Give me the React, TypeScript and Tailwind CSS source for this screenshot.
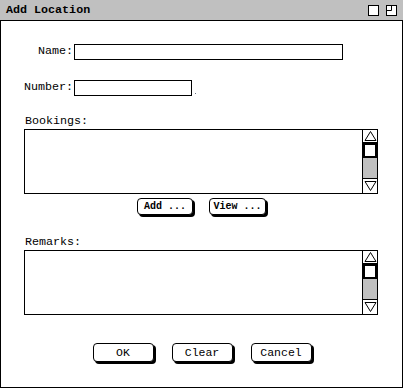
import React from "react";

const mono = "font-['Liberation_Mono','DejaVu_Sans_Mono',monospace]";

function UpArrow() {
  return (
    <svg width="13" height="12" viewBox="0 0 13 12" className="block">
      <polygon points="6.5,1.5 12,10.5 1,10.5" fill="white" stroke="black" strokeWidth="1" />
    </svg>
  );
}

function DownArrow() {
  return (
    <svg width="13" height="12" viewBox="0 0 13 12" className="block">
      <polygon points="1,1.5 12,1.5 6.5,10.5" fill="white" stroke="black" strokeWidth="1" />
    </svg>
  );
}

function ListBox() {
  return (
    <div className="ml-[23px] w-[354px] h-[65px] border border-black bg-white flex">
      <div className="flex-1" />
      {/* scrollbar */}
      <div className="w-[15px] border-l border-black flex flex-col">
        <div className="h-[13px] border-b border-black flex items-center justify-center">
          <UpArrow />
        </div>
        <div className="h-[15px] border-2 border-black bg-white" />
        <div className="flex-1 bg-[#c0c0c0]" />
        <div className="h-[15px] border-t border-black flex items-center justify-center">
          <DownArrow />
        </div>
      </div>
    </div>
  );
}

function SmallButton({ label, w }: { label: string; w: string }) {
  return (
    <button
      className={`${w} h-[17px] border border-black rounded-[4px] bg-white shadow-[2px_2px_0_#000] text-[10px] font-bold leading-none flex items-center justify-center ${mono}`}
    >
      {label}
    </button>
  );
}

function BigButton({ label }: { label: string }) {
  return (
    <button
      className={`w-[61px] h-[19px] border border-black rounded-[4px] bg-white shadow-[2px_2px_0_#000] text-[11.5px] leading-none flex items-center justify-center ${mono}`}
    >
      {label}
    </button>
  );
}

export default function App() {
  return (
    <div className={`w-[403px] h-[388px] bg-white flex flex-col text-black ${mono}`}>
      {/* title bar */}
      <div className="h-[21px] bg-[#c0c0c0] border-b border-black flex items-center pl-[6px] pr-[6px]">
        <span className="pt-[2px] text-[11.7px] font-bold leading-none">Add Location</span>
        <div className="ml-auto flex items-center gap-[7px]">
          <svg width="11" height="11" viewBox="0 0 11 11" className="block">
            <rect x="0.5" y="0.5" width="10" height="10" fill="white" stroke="black" />
          </svg>
          <svg width="11" height="11" viewBox="0 0 11 11" className="block">
            <rect x="0.5" y="0.5" width="10" height="10" fill="white" stroke="black" />
            <polyline points="5.5,0.5 5.5,5.5 0.5,5.5" fill="none" stroke="black" />
          </svg>
        </div>
      </div>

      <div className="flex-1 border-l border-r border-b border-black flex flex-col text-[11.7px]">
        {/* Name */}
        <div className="mt-[23px] flex items-center">
          <span className="w-[72px] text-right leading-none">Name:</span>
          <div className="ml-[1px] w-[269px] h-[16px] border border-black" />
        </div>

        {/* Number */}
        <div className="mt-[20px] flex items-center">
          <span className="w-[72px] text-right leading-none">Number:</span>
          <div className="ml-[1px] w-[118px] h-[16px] border border-black" />
          <span className="ml-[3px] mt-[11px] w-[1px] h-[1px] bg-gray-500" />
        </div>

        {/* Bookings */}
        <div className="mt-[17px] ml-[24px] h-[16px] leading-[16px]">Bookings:</div>
        <ListBox />

        <div className="mt-[4px] flex justify-center gap-[16px]">
          <SmallButton label="Add ..." w="w-[56px]" />
          <SmallButton label="View ..." w="w-[57px]" />
        </div>

        {/* Remarks */}
        <div className="mt-[19px] ml-[24px] h-[16px] leading-[16px]">Remarks:</div>
        <ListBox />

        <div className="mt-[28px] flex justify-center gap-[18px] pl-[1px]">
          <BigButton label="OK" />
          <BigButton label="Clear" />
          <BigButton label="Cancel" />
        </div>
      </div>
    </div>
  );
}
